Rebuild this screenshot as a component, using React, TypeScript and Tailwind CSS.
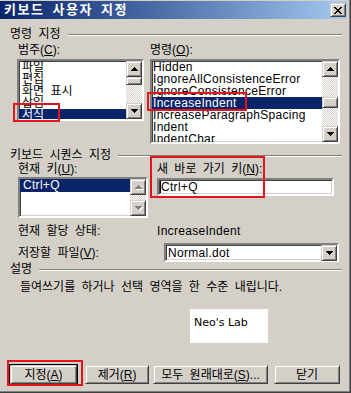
import React from "react";

const font = "font-['Liberation_Sans','Noto_Sans_CJK_KR',sans-serif]";
const raised =
  "bg-[#d4d0c8] border border-t-[#d4d0c8] border-l-[#d4d0c8] border-b-[#404040] border-r-[#404040] shadow-[inset_1px_1px_0_#ffffff,inset_-1px_-1px_0_#808080]";
const sunken =
  "border-2 border-t-[#808080] border-l-[#808080] border-b-white border-r-white shadow-[inset_1px_1px_0_#404040,inset_-1px_-1px_0_#d4d0c8]";
const dither =
  "bg-[repeating-conic-gradient(#ffffff_0%_25%,#d4d0c8_0%_50%)] bg-[length:2px_2px]";

function Tri({ dir, color }: { dir: "up" | "down"; color: string }) {
  const rows = [0, 1, 2, 3];
  return (
    <svg width="7" height="4" shapeRendering="crispEdges">
      {rows.map((r) => {
        const w = dir === "up" ? 1 + r * 2 : 7 - r * 2;
        return <rect key={r} x={(7 - w) / 2} y={r} width={w} height={1} fill={color} />;
      })}
    </svg>
  );
}

function ScrollBtn({ dir, disabled }: { dir: "up" | "down"; disabled?: boolean }) {
  return (
    <div className={`w-[16px] h-[16px] shrink-0 flex items-center justify-center ${raised}`}>
      {disabled ? (
        <div className="relative w-[7px] h-[4px]">
          <div className="absolute left-[1px] top-[1px]">
            <Tri dir={dir} color="#ffffff" />
          </div>
          <div className="absolute left-0 top-0">
            <Tri dir={dir} color="#808080" />
          </div>
        </div>
      ) : (
        <Tri dir={dir} color="#000000" />
      )}
    </div>
  );
}

function U({ children }: { children: React.ReactNode }) {
  return <span className="underline underline-offset-[1px]">{children}</span>;
}

function Header({ text, className }: { text: string; className?: string }) {
  return (
    <div className={`h-[12px] flex items-center pl-[10px] pr-[9px] ${className ?? ""}`}>
      <span className="whitespace-nowrap">{text}</span>
      <div className="flex-1 ml-[7px] mt-[2px] h-0 border-t border-t-[#808080] border-b border-b-white" />
    </div>
  );
}

function Button({ children, w, isDefault }: { children: React.ReactNode; w: string; isDefault?: boolean }) {
  const inner = (
    <div className={`h-[19px] flex items-center justify-center whitespace-nowrap ${raised} ${isDefault ? "" : w}`}>
      {children}
    </div>
  );
  if (isDefault) {
    return <div className={`border border-black ${w}`}>{inner}</div>;
  }
  return inner;
}

export default function App() {
  const categories = ["파일", "편집", "화면 표시", "삽입", "서식"];
  const commands = [
    "Hidden",
    "IgnoreAllConsistenceError",
    "IgnoreConsistenceError",
    "IncreaseIndent",
    "IncreaseParagraphSpacing",
    "Indent",
    "IndentChar",
  ];

  return (
    <div
      className={`relative w-[351px] h-[393px] bg-[#d4d0c8] overflow-hidden ${font} text-[12px] leading-[12px] [word-spacing:3px] text-black shadow-[inset_-1px_-1px_0_#404040,inset_-2px_-2px_0_#808080]`}
    >
      {/* title bar */}
      <div className="mt-[1px] mr-[4px] h-[18px] bg-linear-to-r from-[#0a246a] to-[#a6caf0] flex items-center justify-between pl-[4px] pr-[1px]">
        <span className="text-white font-bold text-[13px] tracking-[1.5px]">키보드 사용자 지정</span>
        <div className={`w-[16px] h-[14px] flex items-center justify-center ${raised}`}>
          <svg width="8" height="7" shapeRendering="crispEdges">
            {[0, 1, 2, 3, 4, 5, 6].map((i) => (
              <React.Fragment key={i}>
                <rect x={i} y={i} width={2} height={1} fill="#000" />
                <rect x={6 - i} y={i} width={2} height={1} fill="#000" />
              </React.Fragment>
            ))}
          </svg>
        </div>
      </div>

      <Header text="명령 지정" className="mt-[9px]" />

      <div className="mt-[4px] h-[12px] flex">
        <span className="ml-[18px] w-[132px]">
          범주(<U>C</U>):
        </span>
        <span>
          명령(<U>O</U>):
        </span>
      </div>

      <div className="mt-[3px] flex items-start">
        {/* categories */}
        <div className={`ml-[17px] w-[127px] h-[62px] bg-white flex ${sunken}`}>
          <div className="flex-1 overflow-hidden">
            {categories.map((c, i) => (
              <div
                key={c}
                className={`h-[12px] leading-[12px] pl-[3px] whitespace-nowrap ${
                  i === 4 ? "bg-[#0a246a] text-white" : ""
                }`}
              >
                {c}
              </div>
            ))}
          </div>
          <div className="w-[16px] flex flex-col">
            <ScrollBtn dir="up" />
            <div className={`h-[8px] ${raised}`} />
            <div className={`flex-1 ${dither}`} />
            <ScrollBtn dir="down" />
          </div>
        </div>

        {/* commands */}
        <div className={`ml-[6px] w-[190px] h-[85px] bg-white flex ${sunken}`}>
          <div className="flex-1 overflow-hidden tracking-[0.3px]">
            {commands.map((c, i) => (
              <div
                key={c}
                className={`h-[12px] leading-[12px] pl-[1px] whitespace-nowrap ${
                  i === 3 ? "bg-[#0a246a] text-white" : ""
                }`}
              >
                {c}
              </div>
            ))}
          </div>
          <div className="w-[16px] flex flex-col">
            <ScrollBtn dir="up" />
            <div className={`h-[20px] ${dither}`} />
            <div className={`h-[11px] ${raised}`} />
            <div className={`flex-1 ${dither}`} />
            <ScrollBtn dir="down" />
          </div>
        </div>
      </div>

      <Header text="키보드 시퀀스 지정" className="mt-[5px]" />

      <div className="mt-[2px] h-[12px] flex">
        <span className="ml-[18px] w-[139px]">
          현재 키(<U>U</U>):
        </span>
        <span>
          새 바로 가기 키(<U>N</U>):
        </span>
      </div>

      <div className="mt-[2px] flex items-start">
        <div className={`ml-[18px] w-[130px] h-[41px] bg-white flex ${sunken}`}>
          <div className="flex-1">
            <div className="h-[13px] leading-[13px] pl-[3px] bg-[#0a246a] text-white tracking-[0.3px]">
              Ctrl+Q
            </div>
          </div>
          <div className="w-[16px] flex flex-col">
            <ScrollBtn dir="up" disabled />
            <div className={`flex-1 ${dither}`} />
            <ScrollBtn dir="down" disabled />
          </div>
        </div>
        <div className={`ml-[9px] mt-[1px] w-[177px] h-[18px] bg-white flex items-center ${sunken}`}>
          <div className="w-px h-[12px] bg-black ml-[1px]" />
          <span className="tracking-[0.3px]">Ctrl+Q</span>
        </div>
      </div>

      <div className="mt-[7px] h-[12px] flex">
        <span className="ml-[18px] w-[139px]">현재 할당 상태:</span>
        <span className="tracking-[0.3px]">IncreaseIndent</span>
      </div>

      <div className="mt-[6px] h-[19px] flex items-center">
        <span className="ml-[18px] w-[146px]">
          저장할 파일(<U>V</U>):
        </span>
        <div className={`w-[175px] h-[19px] bg-white flex items-center ${sunken}`}>
          <span className="flex-1 pl-[2px] tracking-[0.3px]">Normal.dot</span>
          <ScrollBtn dir="down" />
        </div>
      </div>

      <Header text="설명" className="mt-[1px]" />

      <div className="mt-[6px] h-[12px] pl-[20px] whitespace-nowrap">
        들여쓰기를 하거나 선택 영역을 한 수준 내립니다.
      </div>

      <div className="mt-[16px] ml-[190px] w-[78px] h-[34px] bg-white pl-[4px] pt-[8px] font-['DejaVu_Sans',sans-serif] text-[11px] leading-[11px] [word-spacing:0px]">
        Neo's Lab
      </div>

      <div className="mt-[21px] h-[21px] flex items-center">
        <div className="ml-[9px]">
          <Button w="w-[69px]" isDefault>
            지정(<U>A</U>)
          </Button>
        </div>
        <div className="ml-[7px]">
          <Button w="w-[64px]">
            제거(<U>R</U>)
          </Button>
        </div>
        <div className="ml-[4px]">
          <Button w="w-[115px]">
            모두 원래대로(<U>S</U>)...
          </Button>
        </div>
        <div className="ml-[6px]">
          <Button w="w-[66px]">닫기</Button>
        </div>
      </div>

      {/* red annotation boxes */}
      <div className="absolute left-[13px] top-[103px] w-[47px] h-[19px] border-2 border-[#e3141b]" />
      <div className="absolute left-[147px] top-[92px] w-[100px] h-[19px] border-2 border-[#e3141b]" />
      <div className="absolute left-[150px] top-[156px] w-[115px] h-[42px] border-2 border-[#e3141b]" />
      <div className="absolute left-[7px] top-[360px] w-[76px] h-[26px] border-2 border-[#e3141b]" />
    </div>
  );
}
